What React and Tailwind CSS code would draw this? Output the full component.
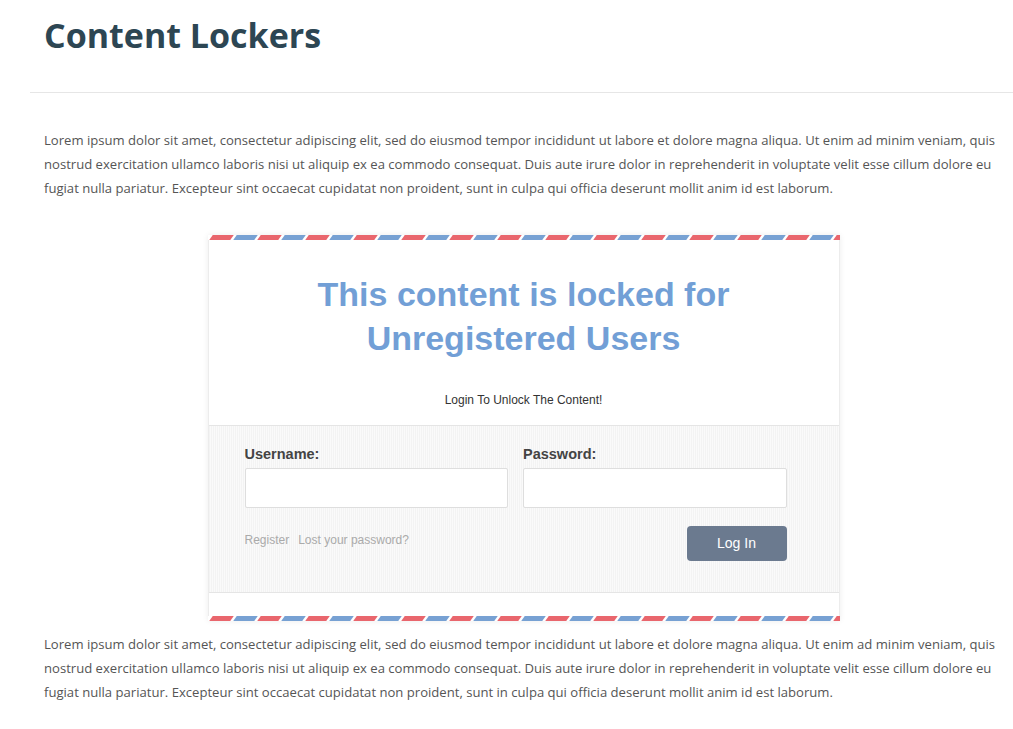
import React from 'react';

const lorem =
  'Lorem ipsum dolor sit amet, consectetur adipiscing elit, sed do eiusmod tempor incididunt ut labore et dolore magna aliqua. Ut enim ad minim veniam, quis nostrud exercitation ullamco laboris nisi ut aliquip ex ea commodo consequat. Duis aute irure dolor in reprehenderit in voluptate velit esse cillum dolore eu fugiat nulla pariatur. Excepteur sint occaecat cupidatat non proident, sunt in culpa qui officia deserunt mollit anim id est laborum.';

const AirmailStripe = () => (
  <div className="flex h-[5px] gap-[3px] overflow-hidden pl-[3px]">
    {Array.from({ length: 28 }).map((_, i) => (
      <div
        key={i}
        className={`h-[5px] w-[21px] shrink-0 -skew-x-[35deg] ${i % 2 === 0 ? 'bg-[#e9666d]' : 'bg-[#77a1d3]'}`}
      ></div>
    ))}
  </div>
);

const App = () => {
  return (
    <div className="min-h-screen bg-white font-['Open_Sans',sans-serif]">
      {/* Title */}
      <div className="px-[44px] pt-[12px] pb-[34px]">
        <h1 className="text-[34px] font-bold leading-[46px] text-[#2d4653]">Content Lockers</h1>
      </div>
      <div className="ml-[30px] border-t border-[#e6e6e6]"></div>

      <div className="pl-[44px] pr-[10px] pt-[35px]">
        <p className="text-[13.1px] leading-[24px] text-[#555]">{lorem}</p>

        {/* Locker */}
        <div className="mt-[35px] flex justify-center">
          <div className="w-[632px] bg-white shadow-[0_0_6px_rgba(0,0,0,0.08)] font-['Liberation_Sans',Arial,sans-serif]">
            <AirmailStripe />
            <div className="border-x border-[#ececec]">
              <div className="pt-[32px] pb-[16px] text-center">
                <h2 className="text-[34px] font-bold leading-[44px] text-[#729fd6]">
                  This content is locked for
                  <br />
                  Unregistered Users
                </h2>
                <p className="mt-[31px] text-[12px] text-[#333]">Login To Unlock The Content!</p>
              </div>

              <div className="border-y border-[#e5e5e5] bg-[repeating-linear-gradient(90deg,#f3f3f3_0px,#f3f3f3_1px,#fafafa_1px,#fafafa_2px)] pt-[20px] pb-[31px] pl-[36px]">
                <div className="flex w-[542px] gap-[15px]">
                  <div className="flex-1">
                    <label className="block text-[14.5px] font-bold leading-[16px] text-[#444]">Username:</label>
                    <input
                      type="text"
                      className="mt-[6px] h-[40px] w-full rounded-[2px] border border-[#dedede] bg-white outline-none"
                    />
                  </div>
                  <div className="flex-1">
                    <label className="block text-[14.5px] font-bold leading-[16px] text-[#444]">Password:</label>
                    <input
                      type="password"
                      className="mt-[6px] h-[40px] w-full rounded-[2px] border border-[#dedede] bg-white outline-none"
                    />
                  </div>
                </div>
                <div className="mt-[18px] flex w-[542px] items-start justify-between">
                  <div className="mt-[5px] flex gap-[9px] text-[12px] text-[#aaa]">
                    <a href="#">Register</a>
                    <a href="#">Lost your password?</a>
                  </div>
                  <button className="h-[35px] w-[100px] rounded-[4px] bg-[#6b7a8f] text-[14px] text-white">Log In</button>
                </div>
              </div>
              <div className="h-[23px]"></div>
            </div>
            <AirmailStripe />
          </div>
        </div>

        <p className="mt-[11px] text-[13.1px] leading-[24px] text-[#555]">{lorem}</p>
      </div>
    </div>
  );
};

export default App;
